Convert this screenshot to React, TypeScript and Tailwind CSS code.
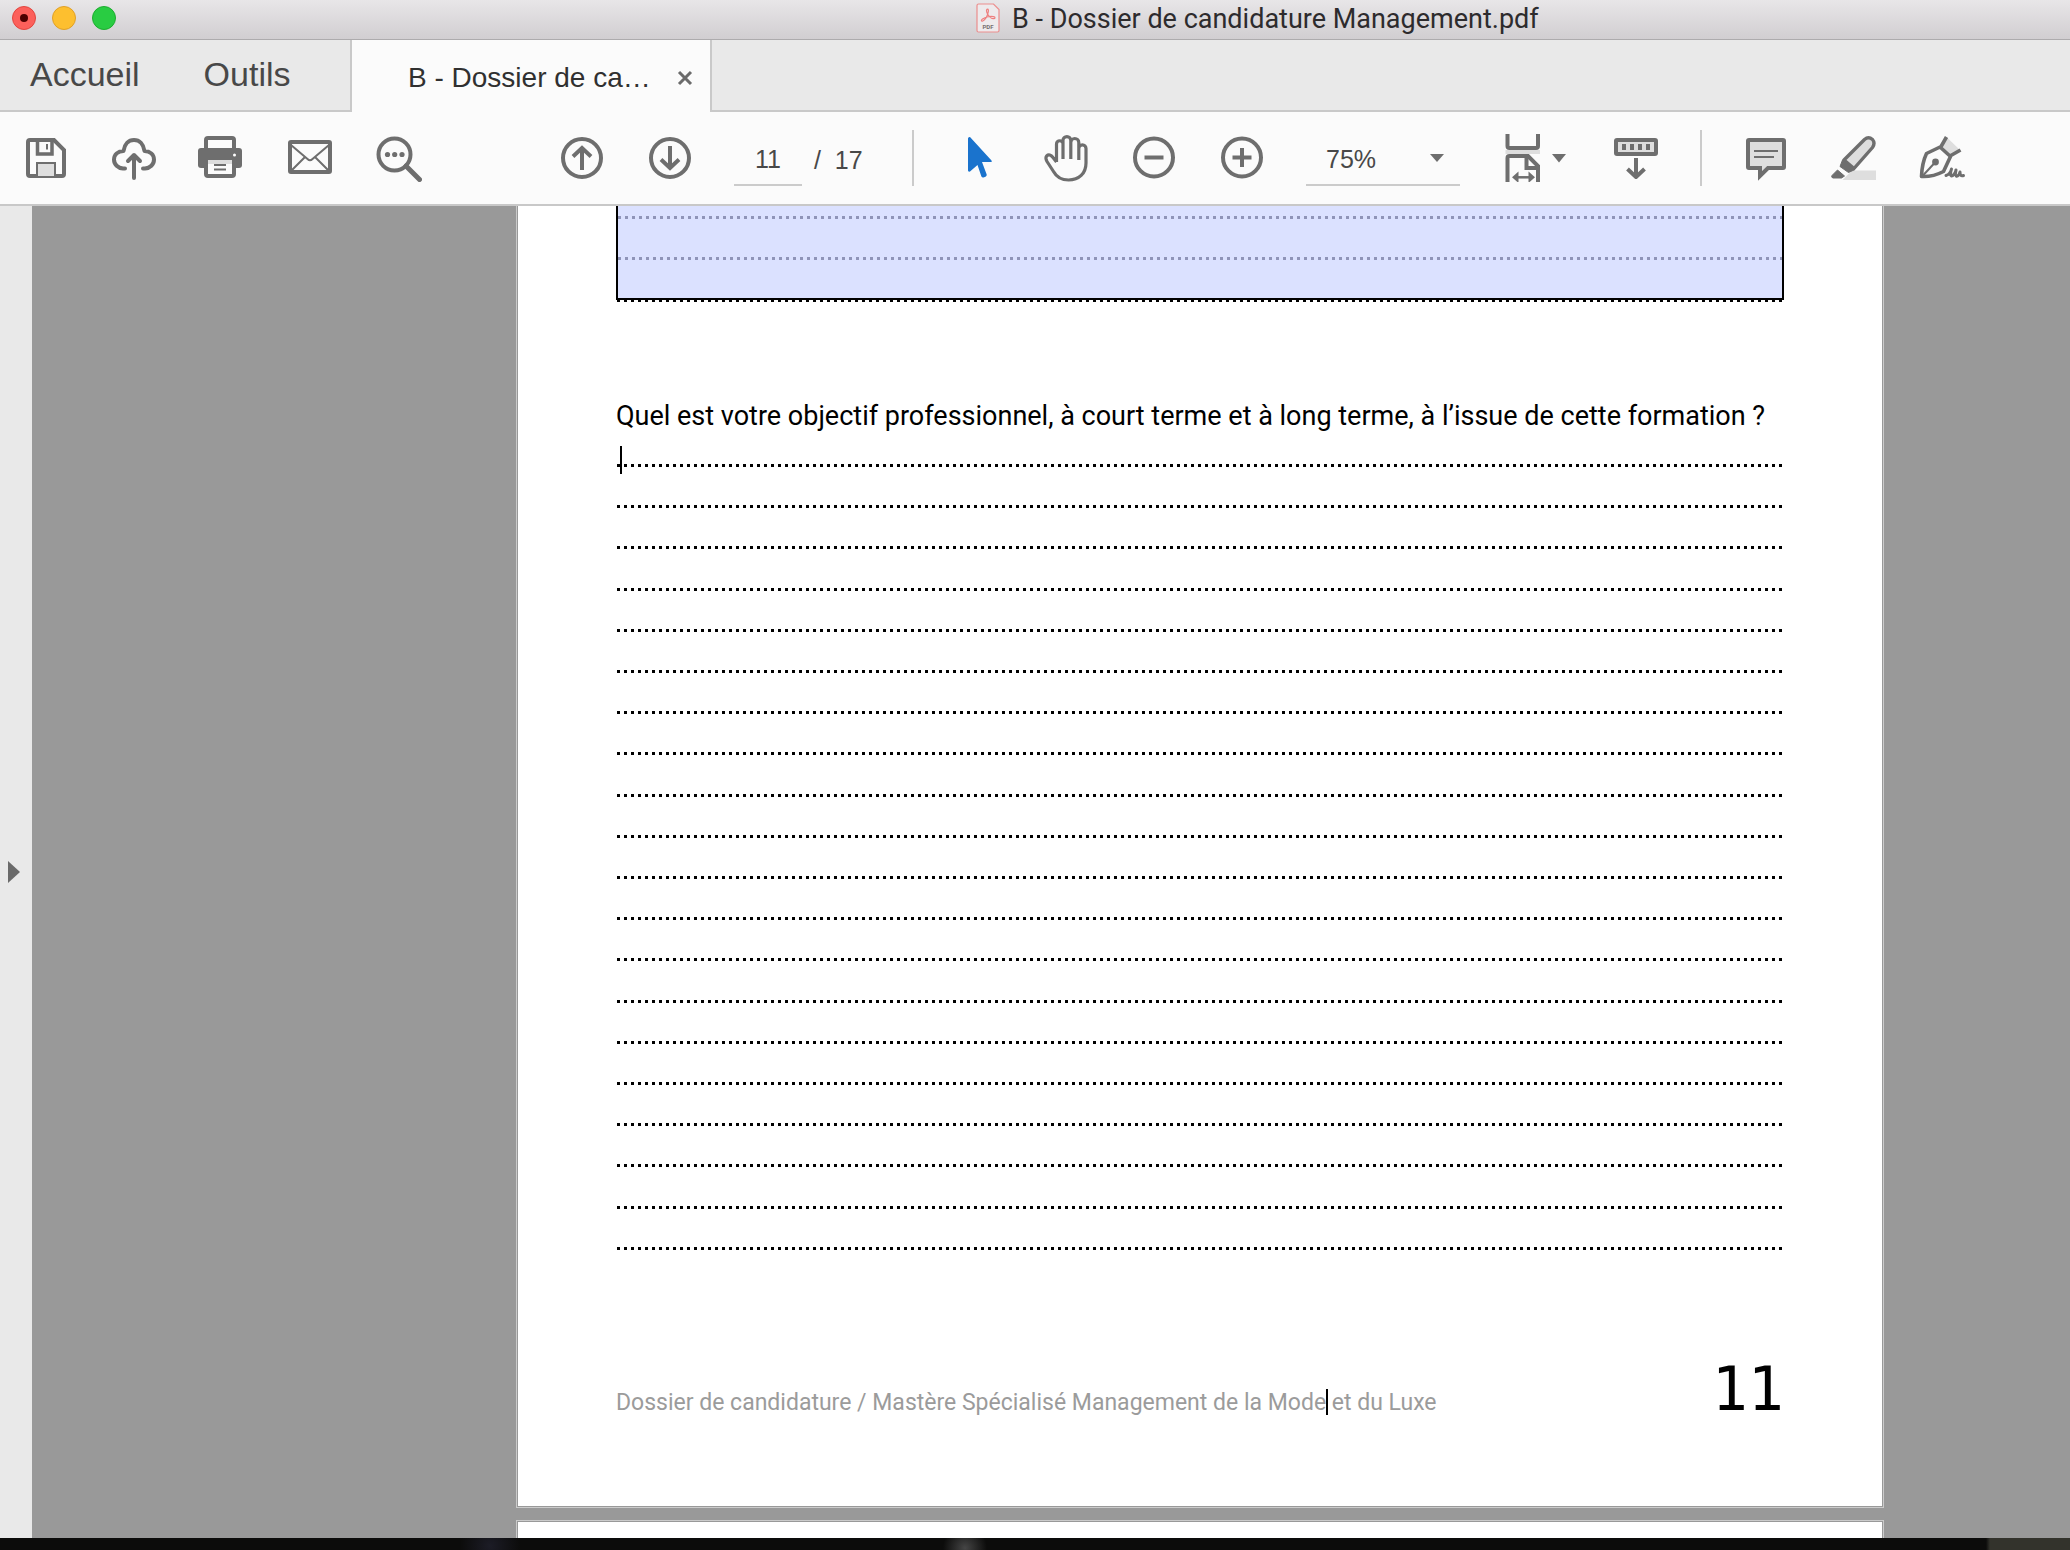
import type { ReactNode } from "react";

const GRAY = "#6e6e6e";
const PALE = "#dedede";

function Icon({ children, width = 48 }: { children: ReactNode; width?: number }) {
  return (
    <svg
      width={width}
      height={48}
      viewBox={`0 0 ${width} 48`}
      fill="none"
      stroke={GRAY}
      strokeWidth={4}
      aria-hidden="true"
    >
      {children}
    </svg>
  );
}

function ToolButton({ label, children }: { label: string; children: ReactNode }) {
  return (
    <button type="button" aria-label={label} className="h-12 shrink-0">
      {children}
    </button>
  );
}

function Divider() {
  return <div className="h-14 w-0.5 shrink-0 bg-[#cbcbcb]" />;
}

function PdfFileIcon() {
  return (
    <svg width="24" height="30" viewBox="0 0 24 30" fill="none" aria-hidden="true">
      <path
        d="M2.5 1H17.500L23 6.500V27.500a1.500 1.500 0 0 1-1.500 1.500H2.500A1.500 1.500 0 0 1 1 27.500V2.500A1.500 1.500 0 0 1 2.500 1z"
        fill="#eeeaec"
        stroke="#ec8e8e"
        strokeWidth="1.2"
      />
      <path
        d="M11.500 6.200c-1.600 0-1 3 .2 5 1.400 2.300 3.600 4.500 5.800 4.500 2 0 2-1.900 0-2.100-3.500-.4-8.500.6-11 2.300-1.800 1.200-1.200 2.700.3 2.100 2.200-.9 4.500-5 5.300-8.300.5-2.100.4-3.500-.6-3.500z"
        stroke="#ee7f7f"
        strokeWidth="1.2"
      />
      <text x="12" y="26" textAnchor="middle" fontSize="6" fontWeight="700" fill="#77706f" fontFamily="Roboto, sans-serif">
        PDF
      </text>
    </svg>
  );
}

function TitleBar() {
  return (
    <header className="flex h-10 shrink-0 items-center border-b border-[#adabad] bg-linear-to-b from-[#e8e6e8] to-[#d1ced1] pb-[3px] pl-3">
      <div className="flex gap-4">
        <button
          type="button"
          aria-label="Fermer la fenêtre"
          className="flex size-6 items-center justify-center rounded-full border border-[#e2463f] bg-[#fc605b]"
        >
          <span className="size-2 rounded-full bg-[#4d0000]" />
        </button>
        <button type="button" aria-label="Réduire" className="size-6 rounded-full border border-[#e0a028] bg-[#fdbf2f]" />
        <button type="button" aria-label="Agrandir" className="size-6 rounded-full border border-[#1dad2f] bg-[#29cc42]" />
      </div>
      <div className="ml-[860px] flex items-center gap-3">
        <PdfFileIcon />
        <h1 className="pt-0.5 font-[Roboto,sans-serif] text-[27px] leading-8 whitespace-nowrap text-[#2d2b2d]">
          B - Dossier de candidature Management.pdf
        </h1>
      </div>
    </header>
  );
}

function TabBar() {
  return (
    <nav className="flex h-[72px] shrink-0 text-[#484848]">
      <div className="flex w-[350px] gap-16 border-b-2 border-[#c9c9c9] pt-[11px] pl-[30px] text-[34px] leading-[46px]">
        <button type="button" className="self-start">Accueil</button>
        <button type="button" className="self-start">Outils</button>
      </div>
      <div className="flex w-[362px] items-center border-x-2 border-[#c9c9c9] bg-[#fbfbfb] pt-1 pl-14">
        <button type="button" className="text-[28px] leading-9 whitespace-nowrap text-[#303030]">
          B - Dossier de ca…
        </button>
        <button type="button" aria-label="Fermer l'onglet" className="ml-[26px]">
          <svg width="16" height="16" viewBox="0 0 16 16" stroke="#6b6b6b" strokeWidth="3" aria-hidden="true">
            <path d="M2 2L14 14M14 2L2 14" />
          </svg>
        </button>
      </div>
      <div className="flex-1 border-b-2 border-[#c9c9c9]" />
    </nav>
  );
}

function Toolbar() {
  return (
    <div className="flex h-[94px] shrink-0 items-center gap-10 border-b-2 border-[#c8c8c8] bg-[#fbfbfb] pl-[22px] text-[25px] text-[#484848]">
      <ToolButton label="Enregistrer">
        <Icon>
          <path d="M8 6H32L42 16V40a2 2 0 0 1-2 2H8a2 2 0 0 1-2-2V8a2 2 0 0 1 2-2z" />
          <path d="M15.500 6V20H30V6" strokeWidth="3.500" />
          <path d="M25 10V15.500" strokeWidth="2" />
          <path d="M15 42V29H33V42" fill={PALE} strokeWidth="2" />
        </Icon>
      </ToolButton>
      <ToolButton label="Envoyer vers le nuage">
        <Icon>
          <path
            strokeLinecap="round"
            strokeLinejoin="round"
            d="M15 34.500H13C8 34 4 30.500 4 25.500C4 20.500 8 17 13.500 17C14.500 10 18.500 6 24 6S33.500 10 34.500 17C40 17 44 20.500 44 25.500C44 30.500 40 34 35 34.500H33"
          />
          <path strokeLinecap="round" strokeLinejoin="round" d="M24 44V21M18 27L24 21L30 27" />
        </Icon>
      </ToolButton>
      <ToolButton label="Imprimer">
        <Icon>
          <path d="M8 16V6a2 2 0 0 1 2-2H34a2 2 0 0 1 2 2V16" />
          <path d="M3 14H41a3 3 0 0 1 3 3V31a3 3 0 0 1-3 3H3a3 3 0 0 1-3-3V17a3 3 0 0 1 3-3z" fill={GRAY} stroke="none" />
          <path d="M8 26H36V40a2 2 0 0 1-2 2H10a2 2 0 0 1-2-2z" fill="#fbfbfb" />
          <path d="M10 26H34V30H10z" fill={PALE} stroke="none" />
          <path d="M16 31H28M16 35.500H28" strokeWidth="2" />
          <circle cx="36.500" cy="21" r="1.500" fill="#fff" stroke="none" />
        </Icon>
      </ToolButton>
      <ToolButton label="Envoyer par courriel">
        <Icon>
          <rect x="4" y="8" width="40" height="30" rx="1" />
          <path d="M5 11L21.500 25Q24 27.500 26.500 25L43 11M5 37L19 23M43 37L29 23" strokeWidth="2" />
        </Icon>
      </ToolButton>
      <ToolButton label="Rechercher">
        <Icon>
          <circle cx="20.500" cy="20.500" r="16" />
          <path d="M32 32L45.500 45.500" strokeWidth="5" strokeLinecap="round" />
          <g fill={GRAY} stroke="none">
            <circle cx="13.500" cy="20.500" r="2.600" />
            <circle cx="20.700" cy="20.500" r="2.600" />
            <circle cx="28" cy="20.500" r="2.600" />
          </g>
        </Icon>
      </ToolButton>

      <div className="ml-24 flex h-12 shrink-0 gap-10">
        <ToolButton label="Page précédente">
          <Icon>
            <circle cx="24" cy="24" r="19" />
            <path d="M24 36V14M15 22.500L24 14L33 22.500" />
          </Icon>
        </ToolButton>
        <ToolButton label="Page suivante">
          <Icon>
            <circle cx="24" cy="24" r="19" />
            <path d="M24 12V34M15 25.500L24 34L33 25.500" />
          </Icon>
        </ToolButton>
      </div>

      <div className="flex h-14 shrink-0 items-start">
        <input
          aria-label="Numéro de page"
          defaultValue="11"
          className="h-14 w-[68px] border-b-2 border-[#cbcbcb] bg-transparent pt-1 text-center outline-none"
        />
        <span className="w-[70px] pt-1.5 pl-3 leading-[48px] whitespace-pre">/  17</span>
      </div>

      <Divider />

      <ToolButton label="Sélectionner">
        <Icon>
          <path
            d="M14 4.500Q14 2.800 16 3L37.500 26.500Q38.500 28 37 28H28L32.700 40.500Q33 42 31.500 42.800L29.500 43.500Q28 43.800 27.300 42.300L23.500 31L16 37.500Q14 38 14 36.500z"
            fill="#1a73cd"
            stroke="none"
          />
        </Icon>
      </ToolButton>
      <ToolButton label="Main">
        <Icon>
          <path
            strokeWidth="3.200"
            strokeLinejoin="round"
            d="M14.500 28L11 23.500C9 20.800 6.500 20 4.700 21.800C3.200 23.300 4 25.500 5 27.500L11.500 37.500C14.500 43 19.500 46 26.500 46C37 46 44 39.500 44 29V14.500a3.600 3.600 0 0 0-7.200 0V26M36.800 14V8.500a4 4 0 0 0-8 0V25M28.800 9V6.500a3.900 3.900 0 0 0-7.800 0V25M21 10a3.250 3.250 0 0 0-6.500 0V28"
          />
        </Icon>
      </ToolButton>
      <ToolButton label="Zoom arrière">
        <Icon>
          <circle cx="24" cy="23.500" r="19" />
          <path d="M14.500 23.500H33.500" />
        </Icon>
      </ToolButton>
      <ToolButton label="Zoom avant">
        <Icon>
          <circle cx="24" cy="23.500" r="19" />
          <path d="M14.500 23.500H33.500M24 14V33" />
        </Icon>
      </ToolButton>

      <div className="relative h-14 w-[154px] shrink-0">
        <select
          aria-label="Niveau de zoom"
          defaultValue="75"
          className="h-14 w-full appearance-none border-b-2 border-[#cbcbcb] bg-transparent pt-1.5 pl-5 outline-none"
        >
          <option value="50">50%</option>
          <option value="75">75%</option>
          <option value="100">100%</option>
        </select>
        <svg
          className="pointer-events-none absolute top-6 right-4"
          width="14"
          height="8"
          viewBox="0 0 14 8"
          fill={GRAY}
          aria-hidden="true"
        >
          <path d="M0 0H14L7 8z" />
        </svg>
      </div>

      <ToolButton label="Ajuster la page">
        <Icon width={72}>
          <path d="M7.500 0V12a2 2 0 0 0 2 2H36a2 2 0 0 0 2-2V0" />
          <path d="M5.500 16H40V20H5.500z" fill={PALE} stroke="none" />
          <path d="M7.500 48V24a2 2 0 0 1 2-2H28L38 32V48" />
          <path d="M26.500 22V34H38" />
          <path d="M15 43.300H32" strokeWidth="2.500" />
          <path d="M12 43.300L18.500 37.500V49zM35 43.300L28.500 37.500V49z" fill={GRAY} stroke="none" />
          <path d="M52 20H66L59 28.500z" fill={GRAY} stroke="none" />
        </Icon>
      </ToolButton>
      <ToolButton label="Mode de défilement">
        <Icon>
          <rect x="4" y="6" width="40" height="14" rx="1" fill={PALE} />
          <path d="M12 10V16M20 10V16M28 10V16M36 10V16" />
          <path strokeLinejoin="round" d="M24 24V43M15.500 35L24 43L32.500 35" />
        </Icon>
      </ToolButton>

      <Divider />

      <ToolButton label="Ajouter un commentaire">
        <Icon>
          <path d="M7 6H41a1 1 0 0 1 1 1V33a1 1 0 0 1-1 1H26L18 42V34H7a1 1 0 0 1-1-1V7a1 1 0 0 1 1-1z" fill={PALE} />
          <path d="M12 17H36M12 23H32" strokeWidth="2.200" />
        </Icon>
      </ToolButton>
      <ToolButton label="Surligner">
        <Icon>
          <path d="M22 36.500H46V46H12.500z" fill={PALE} stroke="none" />
          <path d="M14 26L34.500 5.500Q38.500 2 42.500 5.500Q45.500 9 42.500 13.500L24 34.500z" fill={PALE} strokeWidth="3.400" strokeLinejoin="round" />
          <path d="M12.500 26L25 35.500L18.500 38.500L10 32.500z" fill={GRAY} strokeWidth="1" />
          <path d="M7.500 36L14.500 42L11.500 44H3Q1 43.500 2 41.500z" fill={GRAY} strokeWidth="1" strokeLinejoin="round" />
        </Icon>
      </ToolButton>
      <ToolButton label="Signer">
        <Icon>
          <path d="M28.500 3L42.500 16.500L32 22L22.500 13.500z" fill={PALE} stroke="none" />
          <path
            d="M3.500 42.500Q4 29 8.500 19.500L22 13L32.500 22.500L25.500 37.500Q15 43 3.500 42.500zM22.500 13.500L28.500 3M32 22L42.500 16"
            strokeWidth="3.600"
            strokeLinejoin="round"
          />
          <path d="M4.500 42L17 28.500" strokeWidth="2" />
          <circle cx="17.500" cy="28" r="3.400" fill={GRAY} stroke="none" />
          <path
            d="M28 41.500C31 40.500 33 37 33.500 35C32.500 38 32 41.500 33.500 42C35.500 42 37.500 38.500 38 36C37.500 39 37 42 38.500 42.300C40.500 42 41.500 40 42 38C42 41 43 42.500 45.500 41.500"
            strokeWidth="3"
            strokeLinejoin="round"
            strokeLinecap="round"
          />
        </Icon>
      </ToolButton>
    </div>
  );
}

const FIELD_DOTS = "h-[3px] bg-[linear-gradient(to_right,#8f94b8_3px,transparent_3px)] bg-[length:7px_3px]";
const PAGE_DOTS = "h-[3px] bg-[linear-gradient(to_right,#000_3px,transparent_3px)] bg-[length:7px_3px]";

function DocumentPage() {
  return (
    <article className="flex flex-col border-x border-b border-[#cbcbcb] bg-white px-[99px] text-black shadow-[inset_-1px_0_0_#999,inset_1px_-1px_0_#999]">
      <div className="relative h-[94px] border-x-2 border-b-2 border-black bg-[#dbe1ff] pt-2.5">
        <div className={FIELD_DOTS} />
        <div className="h-[38px]" />
        <div className={FIELD_DOTS} />
        <textarea
          aria-label="Réponse précédente"
          className="absolute inset-0 resize-none bg-transparent outline-none"
        />
      </div>
      <div className="mx-px h-0.5 bg-[linear-gradient(to_right,#000_3px,transparent_3px)] bg-[length:7px_3px]" />

      <label
        htmlFor="objectif"
        className="mt-[94px] font-[Roboto,sans-serif] text-[27px] leading-10 whitespace-nowrap"
      >
        Quel est votre objectif professionnel, à court terme et à long terme, à l’issue de cette formation ?
      </label>

      <div className="relative mt-7 flex h-[824px] flex-col pl-px">
        {Array.from({ length: 20 }, (_, i) => (
          <div key={i} className="flex-1">
            <div className={PAGE_DOTS} />
          </div>
        ))}
        <textarea id="objectif" className="absolute inset-0 resize-none bg-transparent outline-none" />
        <span className="absolute -top-[18px] left-1 h-7 w-0.5 bg-black" />
      </div>

      <footer className="mt-16 mb-20 flex h-[75px] items-baseline justify-between">
        <p className="relative font-[Roboto,sans-serif] text-[23px] leading-8 whitespace-nowrap text-[#9b9b9b]">
          Dossier de candidature / Mastère Spécialisé Management de la Mode
          <span className="relative">
            <span className="absolute top-0 left-0 h-[26px] w-0.5 bg-black" />
          </span>{" "}
          et du Luxe
        </p>
        <p className="font-['DejaVu_Sans_Mono',monospace] text-[60px] leading-[74px]">11</p>
      </footer>
    </article>
  );
}

export default function App() {
  return (
    <div className="flex h-screen flex-col overflow-hidden bg-[#e9e9e9] font-['Liberation_Sans',Arial,sans-serif]">
      <TitleBar />
      <TabBar />
      <Toolbar />
      <div className="flex min-h-0 flex-1">
        <aside className="flex w-8 shrink-0 items-center pl-2">
          <button type="button" aria-label="Afficher le volet de navigation">
            <svg width="12" height="22" viewBox="0 0 12 22" fill="#6a6a6a" aria-hidden="true">
              <path d="M0 0L12 11L0 22z" />
            </svg>
          </button>
        </aside>
        <main className="min-w-0 flex-1 overflow-hidden bg-[#999] pr-[186px] pl-[484px]">
          <DocumentPage />
          <div className="mt-3 h-40 border border-[#cbcbcb] bg-white shadow-[inset_0_0_0_1px_#999]" />
        </main>
      </div>
      <div className="h-3 shrink-0 bg-[#0c0c0b] bg-[radial-gradient(circle_at_965px_10px,#454545,transparent_22px),radial-gradient(circle_at_490px_8px,#1c1c26,transparent_30px),linear-gradient(to_right,transparent_1986px,#33332c_1990px)]" />
    </div>
  );
}
